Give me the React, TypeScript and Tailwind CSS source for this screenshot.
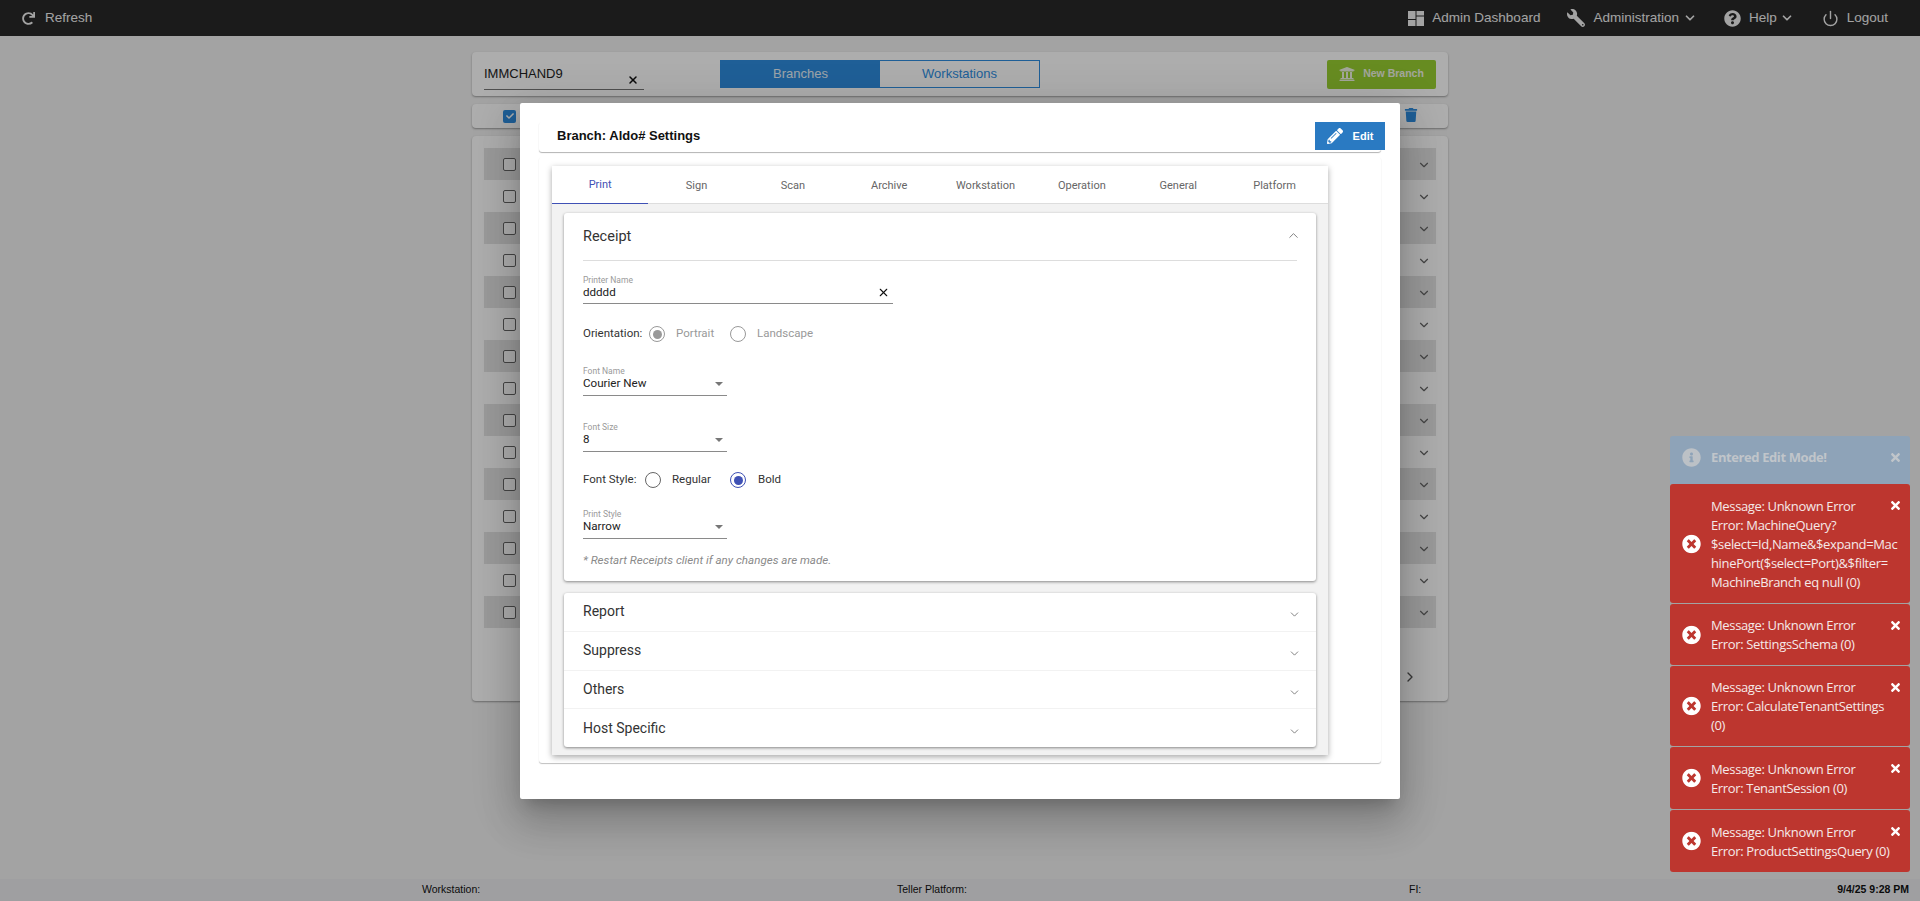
import React from "react";
import { ChevronDown, ChevronUp, ChevronRight, X, Power } from "lucide-react";
import { FaRedo, FaWrench, FaQuestionCircle, FaTimes, FaTimesCircle, FaInfoCircle, FaPencilAlt, FaTrash, FaUniversity, FaCheck } from "react-icons/fa";

const tabs = ["Print", "Sign", "Scan", "Archive", "Workstation", "Operation", "General", "Platform"];
const rows = Array.from({ length: 15 }, (_, i) => i);

function Dash() {
  return (
    <svg width="16" height="15" viewBox="0 0 16 15" fill="currentColor">
      <rect x="0" y="0" width="7.5" height="8" />
      <rect x="8.5" y="0" width="7.5" height="4.5" />
      <rect x="0" y="9" width="7.5" height="6" />
      <rect x="8.5" y="5.5" width="7.5" height="9.5" />
    </svg>
  );
}

function Select({ label, value }: { label: string; value: string }) {
  return (
    <div className="relative w-[144px] h-[29px] border-b border-[#8a8a8a]">
      <div className="text-[8.5px] leading-[9px] text-[#9a9a9a]">{label}</div>
      <div className="text-[11.6px] leading-[13px] mt-[1px] text-[#222]">{value}</div>
      <div className="absolute right-[4px] top-[15px] w-0 h-0 border-x-[4px] border-x-transparent border-t-[4px] border-t-[#777]" />
    </div>
  );
}

function Radio({ checked, color }: { checked?: boolean; color: string }) {
  return (
    <span className={`w-[16px] h-[16px] rounded-full border flex items-center justify-center ${color}`}>
      {checked && <span className="w-[9px] h-[9px] rounded-full bg-current" />}
    </span>
  );
}

function Toast({ lines, h }: { lines: string[]; h: string }) {
  return (
    <div className={`relative bg-[#bd362f] text-[#f5e9e8] rounded-[3px] pl-[41px] pt-[1px] flex flex-col justify-center text-[13px] tracking-[-0.35px] leading-[19px] font-['Open_Sans',sans-serif] ${h}`}>
      <FaTimesCircle className="absolute left-[12px] top-1/2 -translate-y-1/2 text-white" size={19} />
      <FaTimes className="absolute right-[8px] top-[15px] text-white" size={13} />
      {lines.map((l) => (
        <div key={l} className="whitespace-nowrap">{l}</div>
      ))}
    </div>
  );
}

export default function App() {
  return (
    <div className="relative h-[901px] overflow-hidden bg-[#f0f0f0] flex flex-col font-['Liberation_Sans',sans-serif]">
      <header className="h-[36px] shrink-0 bg-[#292929] text-[#f0f0f0] flex items-center justify-between pl-[22px] pr-[32px] text-[13.5px]">
        <div className="flex items-center gap-[10px]">
          <FaRedo size={13} />
          <span>Refresh</span>
        </div>
        <div className="flex items-center">
          <span className="text-[#f0f0f0] mr-[8px]"><Dash /></span>
          <span>Admin Dashboard</span>
          <FaWrench size={18} className="ml-[27px] mr-[8px] -scale-x-100" />
          <span>Administration</span>
          <ChevronDown size={14} strokeWidth={3} className="ml-[4px]" />
          <FaQuestionCircle size={17} className="ml-[27px] mr-[8px]" />
          <span>Help</span>
          <ChevronDown size={14} strokeWidth={3} className="ml-[3px]" />
          <Power size={17} strokeWidth={2} className="ml-[28px] mr-[8px]" />
          <span>Logout</span>
        </div>
      </header>

      <main className="flex-1 min-h-0 pt-[16px] pl-[472px]">
        <div className="w-[976px] h-[44px] bg-white rounded-[4px] shadow-[0_1px_2px_rgba(0,0,0,.35)] flex items-center pl-[12px] pr-[12px]">
          <div className="relative w-[160px] h-[25px] mt-[7px] border-b border-[#777] text-[13px] leading-[18px] text-[#222]">
            IMMCHAND9
            <X size={12} strokeWidth={3} className="absolute right-[5px] top-[9px] text-[#111]" />
          </div>
          <div className="flex ml-[76px] w-[320px] h-[28px] text-[13px] border border-[#2e8ddf]">
            <div className="w-[159px] bg-[#2e8ddf] text-[#e8f2fa] flex items-center justify-center">Branches</div>
            <div className="flex-1 bg-white text-[#2e8ddf] flex items-center justify-center">Workstations</div>
          </div>
          <div className="ml-auto w-[109px] h-[29px] rounded-[2px] bg-[#98ce32] text-[#f0f5e5] text-[10.5px] font-bold flex items-center justify-center gap-[8px]">
            <FaUniversity size={16} />
            New Branch
          </div>
        </div>

        <div className="w-[976px] h-[24px] mt-[8px] bg-white rounded-[4px] shadow-[0_1px_2px_rgba(0,0,0,.35)] flex items-center justify-between pl-[31px] pr-[30px]">
          <span className="w-[13px] h-[13px] rounded-[2px] bg-[#2e8ddf] flex items-center justify-center text-white"><FaCheck size={8} /></span>
          <FaTrash size={14} className="text-[#2e8ddf] -translate-y-[1px]" />
        </div>

        <div className="relative w-[976px] h-[565px] mt-[8px] bg-white rounded-[4px] shadow-[0_1px_2px_rgba(0,0,0,.35)] px-[12px] pt-[12px]">
          {rows.map((i) => (
            <div key={i} className={`h-[32px] flex items-center justify-between pl-[19px] pr-[5px] ${i % 2 === 0 ? "bg-[#e4e4e4]" : ""}`}>
              <span className="w-[13px] h-[13px] rounded-[2px] border border-[#666] bg-white" />
              <ChevronDown size={14} className="text-[#666] mt-[2px]" />
            </div>
          ))}
          <ChevronRight size={16} className="absolute right-[30px] top-[533px] text-[#555]" />
        </div>
      </main>

      <footer className="h-[22px] shrink-0 bg-[#eaebee] text-[10.5px] text-[#111] relative">
        <div className="flex items-center h-full">
          <span className="ml-[422px] w-[475px]">Workstation:</span>
          <span className="w-[512px]">Teller Platform:</span>
          <span>FI:</span>
          <span className="ml-auto mr-[11px] font-bold">9/4/25 9:28 PM</span>
        </div>
      </footer>

      <div className="absolute inset-0 bg-black/32" />

      <div className="absolute left-[520px] top-[103px] w-[880px] h-[696px] bg-white rounded-[2px] shadow-[0_11px_15px_-7px_rgba(0,0,0,.2),0_24px_38px_3px_rgba(0,0,0,.14),0_9px_46px_8px_rgba(0,0,0,.12)] px-[19px] pt-[19px] font-['Roboto',sans-serif]">
        <div className="relative w-[842px] h-[30px] rounded-[3px] shadow-[0_1px_1px_rgba(0,0,0,.3)] flex items-center pl-[18px] pb-[2px] text-[13px] font-bold font-['Liberation_Sans',sans-serif] text-[#111]">
          Branch: Aldo# Settings
          <div className="absolute left-[776px] top-0 w-[70px] h-[28px] bg-[#2a7ac2] text-white text-[11px] flex items-center justify-center gap-[10px]">
            <FaPencilAlt size={16} />
            Edit
          </div>
        </div>

        <div className="w-[842px] h-[606px] mt-[5px] rounded-[3px] shadow-[0_1px_1px_rgba(0,0,0,.25)] pl-[13px] pt-[9px]">
          <div className="w-[776px] h-[589px] bg-[#f2f2f2] shadow-[0_2px_6px_rgba(0,0,0,.35)]">
            <div className="flex h-[38px] bg-white border-b border-[#ddd]">
              {tabs.map((t, i) => (
                <div key={t} className={`w-[96.35px] h-[38px] pt-[2px] flex items-center justify-center text-[11px] ${i === 0 ? "text-[#3f51b5] border-b border-[#3f51b5]" : "text-[#666]"}`}>{t}</div>
              ))}
            </div>

            <div className="ml-[12px] mt-[9px] w-[752px] h-[368px] bg-white rounded-[3px] shadow-[0_1px_3px_rgba(0,0,0,.45)] px-[19px]">
              <div className="h-[48px] flex items-center justify-between border-b border-[#ddd] text-[14.5px] text-[#333] pr-[1px]">
                <span>Receipt</span>
                <ChevronUp size={15} strokeWidth={1.5} className="text-[#777] -mt-[2px] -mr-[5px]" />
              </div>

              <div className="relative w-[310px] h-[28px] mt-[15px] border-b border-[#8a8a8a]">
                <div className="text-[8.5px] leading-[9px] text-[#9a9a9a]">Printer Name</div>
                <div className="text-[11.6px] leading-[13px] mt-[1px] text-[#222]">ddddd</div>
                <X size={13} strokeWidth={2} className="absolute right-[3px] top-[10px] text-[#111]" />
              </div>

              <div className="flex items-center h-[16px] mt-[22px] text-[11.5px]">
                <span className="w-[66px] text-[#333]">Orientation:</span>
                <Radio checked color="border-[#999] text-[#999]" />
                <span className="ml-[11px] w-[54px] text-[#999]">Portrait</span>
                <Radio color="border-[#999]" />
                <span className="ml-[11px] text-[#999]">Landscape</span>
              </div>

              <div className="mt-[25px]"><Select label="Font Name" value="Courier New" /></div>
              <div className="mt-[27px]"><Select label="Font Size" value="8" /></div>

              <div className="flex items-center h-[16px] mt-[20px] text-[11.5px] text-[#333]">
                <span className="w-[62px]">Font Style:</span>
                <Radio color="border-[#666]" />
                <span className="ml-[11px] w-[58px]">Regular</span>
                <Radio checked color="border-[#3f51b5] text-[#3f51b5]" />
                <span className="ml-[12px]">Bold</span>
              </div>

              <div className="mt-[22px]"><Select label="Print Style" value="Narrow" /></div>
              <div className="mt-[15px] text-[11.6px] leading-[13px] italic text-[#8a8a8a]">* Restart Receipts client if any changes are made.</div>
            </div>

            <div className="ml-[12px] mt-[12px] w-[752px] h-[154px] bg-white rounded-[3px] shadow-[0_1px_3px_rgba(0,0,0,.45)] flex flex-col">
              {["Report", "Suppress", "Others", "Host Specific"].map((t, i) => (
                <div key={t} className={`flex-1 flex items-center justify-between pl-[19px] pr-[15px] text-[14px] text-[#333] ${i < 3 ? "border-b border-[#f2f2f2]" : ""}`}>
                  <span>{t}</span>
                  <ChevronDown size={13} strokeWidth={1.5} className="text-[#666] mt-[6px]" />
                </div>
              ))}
            </div>
          </div>
        </div>
      </div>

      <div className="absolute left-[1670px] top-[436px] w-[240px] flex flex-col gap-[1px]">
        <div className="relative -mb-[1px] h-[48px] bg-[#8ea3b8] rounded-t-[3px] pl-[41px] pb-[4px] flex items-center text-[13px] tracking-[-0.4px] font-bold text-[#c0c5ca] font-['Open_Sans',sans-serif]">
          <FaInfoCircle size={19} className="absolute left-[12px] top-[12px] text-[#bcc1c6]" />
          Entered Edit Mode!
          <FaTimes size={13} className="absolute right-[8px] top-[15px] text-[#c0c5ca]" />
        </div>
        <Toast h="h-[119px]" lines={["Message: Unknown Error", "Error: MachineQuery?", "$select=Id,Name&$expand=Mac", "hinePort($select=Port)&$filter=", "MachineBranch eq null (0)"]} />
        <Toast h="h-[61px]" lines={["Message: Unknown Error", "Error: SettingsSchema (0)"]} />
        <Toast h="h-[80px]" lines={["Message: Unknown Error", "Error: CalculateTenantSettings", "(0)"]} />
        <Toast h="h-[62px]" lines={["Message: Unknown Error", "Error: TenantSession (0)"]} />
        <Toast h="h-[62px]" lines={["Message: Unknown Error", "Error: ProductSettingsQuery (0)"]} />
      </div>
    </div>
  );
}
